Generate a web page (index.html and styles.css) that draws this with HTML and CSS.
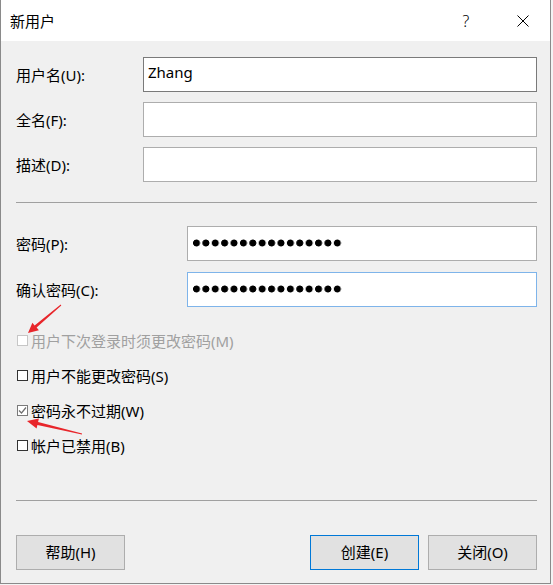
FILE: index.html
```html
<!DOCTYPE html>
<html lang="zh-CN">
<head>
    <meta charset="UTF-8">
    <meta name="viewport" content="width=device-width, initial-scale=1.0">
    <title>新用户</title>
    <link rel="stylesheet" href="styles.css">
</head>
<body>
    <div class="dialog">
        <div class="titlebar">
            <span class="title">新用户</span>
            <span class="tb-btn help">?</span>
            <span class="tb-btn close">
                <svg width="12" height="12" viewBox="0 0 12 12">
                    <path d="M0.5 0.5 L11.5 11.5 M11.5 0.5 L0.5 11.5" stroke="#000" stroke-width="1" fill="none"/>
                </svg>
            </span>
        </div>

        <div class="content">
            <div class="fields user-fields">
                <label class="label" for="username">用户名(U):</label>
                <input class="field hover" id="username" type="text" value="Zhang">
                <label class="label" for="fullname">全名(F):</label>
                <input class="field" id="fullname" type="text">
                <label class="label" for="desc">描述(D):</label>
                <input class="field" id="desc" type="text">
            </div>

            <hr class="sep">

            <div class="fields pass-fields">
                <span class="label">密码(P):</span>
                <div class="field pw"><span class="dots"></span></div>
                <span class="label">确认密码(C):</span>
                <div class="field pw focus"><span class="dots"></span></div>
            </div>

            <div class="checks">
                <div class="check disabled"><span class="box"></span>用户下次登录时须更改密码(M)</div>
                <div class="check"><span class="box"></span>用户不能更改密码(S)</div>
                <div class="check"><span class="box checked">
                    <svg width="9" height="9" viewBox="0 0 9 9">
                        <path d="M1 4.5 L3.5 7 L8 1.5" stroke="#6d6d6d" stroke-width="1.2" fill="none"/>
                    </svg>
                </span>密码永不过期(W)</div>
                <div class="check"><span class="box"></span>帐户已禁用(B)</div>
            </div>

            <hr class="sep sep-bottom">

            <div class="buttons">
                <button class="btn">帮助(H)</button>
                <span class="spacer"></span>
                <button class="btn default">创建(E)</button>
                <button class="btn">关闭(O)</button>
            </div>
        </div>
    </div>

    <!-- red annotation arrows drawn over the dialog -->
    <svg class="marks" width="553" height="585" viewBox="0 0 553 585">
        <polygon fill="#e8262b" points="61.3,305.4 36.6,327.6 38.9,330.3 28,333 32.4,322.7 34.6,325.4 60.7,304.6"/>
        <polygon fill="#e8262b" points="82.1,433.5 38.1,422.0 38.9,418.6 27,421 36.6,428.4 37.4,425.0 81.9,434.5"/>
    </svg>
</body>
</html>
```

FILE: styles.css
```css
* {
    box-sizing: border-box;
}
body {
    margin: 0;
    position: relative;
    width: 553px;
    height: 585px;
    background-color: #f3f3f3;
    font-family: "Noto Sans", "Noto Sans CJK SC", sans-serif;
    font-size: 15px;
    color: #000;
    overflow: hidden;
}
.dialog {
    width: 551px;
    height: 584px;
    background-color: #f0f0f0;
    border: 1px solid #8a8a8a;
    border-top: none;
}
.titlebar {
    height: 41px;
    background-color: #fff;
    display: flex;
    align-items: center;
    padding: 0 4px 0 9px;
}
.title {
    flex: 1;
    line-height: 20px;
}
.tb-btn {
    width: 46px;
    height: 41px;
    display: flex;
    align-items: center;
    justify-content: center;
}
.help {
    margin-right: 11px;
    font-weight: 300;
    font-size: 16px;
}
.content {
    padding: 16px 13px 0 15px;
}
.fields {
    display: grid;
    align-items: center;
}
.user-fields {
    grid-template-columns: 127px 1fr;
    row-gap: 10px;
}
.pass-fields {
    grid-template-columns: 171px 1fr;
    row-gap: 11px;
}
.label {
    line-height: 20px;
}
.field {
    height: 35px;
    width: 100%;
    margin: 0;
    background-color: #fff;
    border: 1px solid #adadad;
    border-radius: 0;
    padding: 2px 4px 8px;
    font-family: inherit;
    font-size: 15px;
    color: #000;
    outline: none;
}
.field.hover {
    border-color: #7a7a7a;
}
.field.focus {
    border-color: #7eb4ea;
}
.pw {
    display: flex;
    align-items: center;
    padding: 0 0 2px 5px;
}
.dots {
    display: block;
    width: 150px;
    height: 8px;
    background: radial-gradient(circle at 3.5px 4px, #000 3.2px, transparent 3.8px) 0 0 / 9.4px 8px repeat-x;
}
.sep {
    border: none;
    height: 1px;
    background-color: #a0a0a0;
    margin: 20px 0 23px;
}
.checks {
    margin-top: 16px;
}
.check {
    height: 35px;
    display: flex;
    align-items: center;
    line-height: 20px;
}
.check.disabled {
    color: #a0a0a0;
}
.box {
    width: 11px;
    height: 11px;
    border: 1px solid #333;
    background-color: #fff;
    margin: 0 3px 0 1px;
    display: flex;
    align-items: center;
    justify-content: center;
}
.disabled .box {
    border-color: #c6c6c6;
}
.box.checked {
    border-color: #7a7a7a;
}
.sep-bottom {
    margin: 37px 0 34px;
}
.buttons {
    display: flex;
    gap: 9px;
}
.spacer {
    flex: 1;
}
.btn {
    width: 109px;
    height: 35px;
    margin: 0;
    background-color: #e1e1e1;
    border: 1px solid #adadad;
    border-radius: 0;
    font-family: inherit;
    font-size: 15px;
    color: #000;
    padding: 0 0 2px;
}
.btn.default {
    border-color: #0078d7;
}
.marks {
    position: absolute;
    left: 0;
    top: 0;
    pointer-events: none;
}
```
